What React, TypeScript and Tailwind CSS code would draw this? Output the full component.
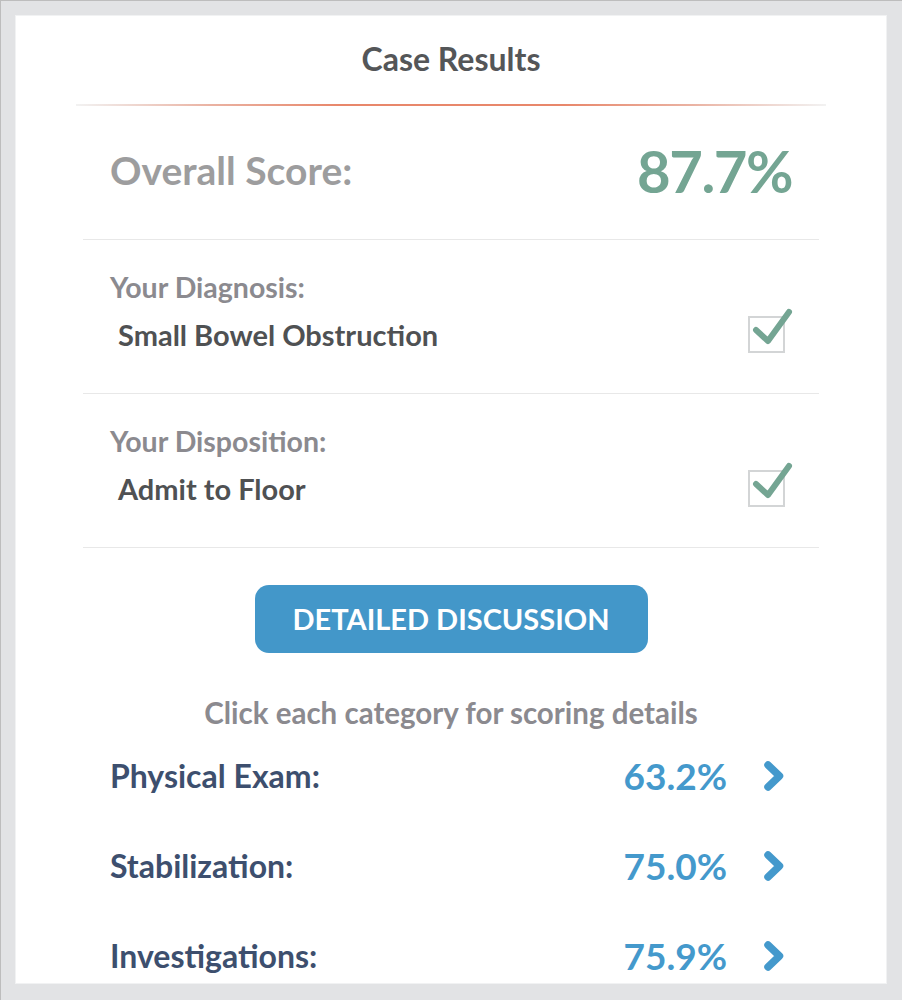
import { Fragment } from 'react';

const font = { fontFamily: 'Lato, "Open Sans", sans-serif' };

const decisions = [
  { label: 'Your Diagnosis:', value: 'Small Bowel Obstruction' },
  { label: 'Your Disposition:', value: 'Admit to Floor' },
];

const categories = [
  { name: 'Physical Exam:', score: '63.2%' },
  { name: 'Stabilization:', score: '75.0%' },
  { name: 'Investigations:', score: '75.9%' },
];

function CheckedBox() {
  return (
    <div className="relative w-[37px] h-[37px] border-2 border-[#d3d5d6] mr-[7px]">
      <svg className="absolute -top-[12px] left-[1px]" width="44" height="44" viewBox="0 0 44 44" fill="none">
        <path d="M5 24 L17 35 L38 6" stroke="#74a593" strokeWidth="6" strokeLinecap="round" strokeLinejoin="round" />
      </svg>
    </div>
  );
}

function Chevron() {
  return (
    <svg width="22" height="30" viewBox="0 0 22 30" fill="none">
      <path d="M5 4 L16.5 15 L5 26" stroke="#4499cc" strokeWidth="7.5" strokeLinecap="round" strokeLinejoin="round" />
    </svg>
  );
}

export default function App() {
  return (
    <div
      className="min-h-[1000px] bg-[#e2e3e5] border-t border-l border-[#bdbdbd] pt-[14px] pl-[14px] pr-[15px] pb-[16px]"
      style={font}
    >
      <div className="h-[969px] bg-white border border-[#f1f2f3] overflow-hidden">
        {/* Header */}
        <div className="h-[88px] flex items-end justify-center pb-[29px]">
          <h1 className="text-[32px] leading-none font-bold text-[#545658]">Case Results</h1>
        </div>
        <div className="mx-[60px] h-[2px] bg-[linear-gradient(to_right,#f2f2f2,#eab2a2_18%,#e8876b_35%,#e8876b_65%,#eab2a2_82%,#f2f2f2)]" />

        <div className="mx-[67px]">
          {/* Overall score */}
          <div className="h-[134px] flex items-center justify-between px-[27px] pb-[4px] border-b border-[#e8e8e8]">
            <span className="text-[39px] font-bold text-[#9d9d9e]">Overall Score:</span>
            <span className="text-[58px] font-bold text-[#74a593] tracking-tight">87.7%</span>
          </div>

          {decisions.map((d) => (
            <Fragment key={d.label}>
              <div className="h-[154px] flex items-center justify-between pl-[27px] pr-[27px] pb-[12px] border-b border-[#e8e8e8]">
                <div className="flex flex-col gap-[14px]">
                  <span className="text-[28.5px] leading-[34px] font-bold text-[#8b8a8f]">{d.label}</span>
                  <span className="text-[29px] leading-[34px] font-bold text-[#4f5153] pl-[8px]">{d.value}</span>
                </div>
                <div className="mt-[48px]">
                  <CheckedBox />
                </div>
              </div>
            </Fragment>
          ))}

          {/* Discussion button */}
          <div className="flex justify-center pt-[37px]">
            <button className="w-[393px] h-[68px] rounded-[14px] bg-[#4397c9] text-white text-[29px] font-bold uppercase">
              Detailed Discussion
            </button>
          </div>

          <p className="mt-[43px] text-center text-[29.5px] leading-[34px] font-bold text-[#8b8a8f]">
            Click each category for scoring details
          </p>

          <div className="mt-[1px]">
            {categories.map((c) => (
              <div key={c.name} className="h-[90px] flex items-center pl-[27px] pr-[34px]">
                <span className="flex-1 text-[32px] font-bold text-[#3d4f6e]">{c.name}</span>
                <span className="text-[37px] font-bold text-[#4499cc]">{c.score}</span>
                <span className="ml-[36px] flex items-center">
                  <Chevron />
                </span>
              </div>
            ))}
          </div>
        </div>
      </div>
    </div>
  );
}
